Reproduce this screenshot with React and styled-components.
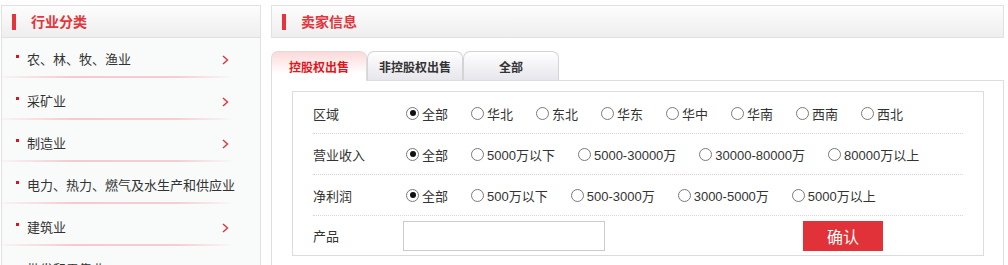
import React from "react";
import styled, { createGlobalStyle } from "styled-components";

const Global = createGlobalStyle`
  html, body { margin: 0; padding: 0; background: #fff; }
  body { font-family: "Liberation Sans", "Noto Sans CJK SC", sans-serif; font-size: 13px; color: #333; }
  * { box-sizing: border-box; }
`;

const RED = "#e3353b";

const Page = styled.div`
  display: flex;
  align-items: flex-start;
  gap: 10px;
  padding: 5px 0 0 1px;
  width: 1008px;
  height: 265px;
  overflow: hidden;
`;

const LeftPanel = styled.div`
  width: 260px;
  height: 320px;
  flex-shrink: 0;
  border: 1px solid #e1e1e1;
  background: #f9fafa;
`;

const PanelHeader = styled.div`
  display: flex;
  align-items: center;
  height: ${(p) => (p.$boxed ? "33px" : "32px")};
  border: ${(p) => (p.$boxed ? "1px solid #e1e1e1" : "none")};
  border-bottom: 1px solid #e1e1e1;
  background: linear-gradient(#fdfdfd, #eeeeee);
  padding-left: 10px;
`;

const Bar = styled.span`
  width: 4px;
  height: 16px;
  background: ${RED};
  margin-right: 15px;
`;

const HeaderTitle = styled.span`
  color: ${RED};
  font-weight: bold;
  font-size: 14px;
  line-height: 20px;
`;

const List = styled.ul`
  list-style: none;
  margin: 0;
  padding: 0;
`;

const Item = styled.li`
  padding-top: 12px;
  margin-bottom: 2px;
`;

const ItemRow = styled.div`
  display: flex;
  align-items: center;
  height: 20px;
  padding: 0 0 0 14px;
`;

const Dot = styled.span`
  flex-shrink: 0;
  width: 3px;
  height: 3px;
  background: #d4161c;
  align-self: flex-start;
  margin-top: 5px;
  margin-right: 8px;
`;

const ItemText = styled.span`
  font-size: 13px;
  line-height: 20px;
  color: #333;
  white-space: nowrap;
`;

const Chevron = styled.svg`
  margin-left: auto;
  margin-right: 31px;
  display: block;
  flex-shrink: 0;
`;

const Underline = styled.div`
  margin-top: 6px;
  width: 233px;
  height: 2px;
  background: linear-gradient(to right, rgba(245, 190, 198, 0.1), #f6c9cf 30%, #f6cdd3 75%, rgba(246, 205, 211, 0));
`;

const RightCol = styled.div`
  width: 733px;
  flex-shrink: 0;
  display: flex;
  flex-direction: column;
`;

const TabBar = styled.div`
  display: flex;
  align-items: flex-end;
  height: 29px;
  margin-top: 13px;
`;

const Tab = styled.div`
  position: relative;
  width: 96px;
  height: ${(p) => (p.$active ? "30px" : "29px")};
  margin-bottom: ${(p) => (p.$active ? "-1px" : "0")};
  z-index: ${(p) => (p.$active ? 1 : 0)};
  border: 1px solid ${(p) => (p.$active ? "#dcdcdc" : "#d4d4d4")};
  border-bottom: none;
  border-radius: 7px 7px 0 0;
  background: ${(p) =>
    p.$active
      ? "linear-gradient(#fcd9d9, #ffffff 75%)"
      : "linear-gradient(#ffffff, #e6e6ec)"};
  color: ${(p) => (p.$active ? "#e0161c" : "#333")};
  font-weight: bold;
  font-size: 12px;
  display: flex;
  align-items: center;
  justify-content: center;
  padding-bottom: ${(p) => (p.$active ? "1px" : "0")};
`;

const ContentBox = styled.div`
  border: 1px solid #dedede;
  border-bottom: none;
  padding: 10px 19px 0 20px;
  height: 200px;
`;

const InnerBox = styled.div`
  border: 1px solid #dcdcdc;
  padding: 1px 20px 0 20px;
  background: #fff;
`;

const Row = styled.div`
  display: flex;
  align-items: center;
  height: ${(p) => (p.$last ? "39px" : "41px")};
  border-bottom: ${(p) => (p.$last ? "none" : "1px dotted #d6d6d6")};
`;

const Label = styled.span`
  width: 90px;
  flex-shrink: 0;
  font-size: 13px;
  color: #333;
`;

const Option = styled.label`
  display: flex;
  align-items: center;
  margin-right: 20px;
  font-size: 13px;
  color: #333;
  white-space: nowrap;
`;

const Radio = styled.span`
  width: 13px;
  height: 13px;
  border-radius: 50%;
  border: 1px solid #7a7a7a;
  background: #fff;
  margin: 0 3px;
  display: flex;
  align-items: center;
  justify-content: center;
  &::after {
    content: "";
    width: 6px;
    height: 6px;
    border-radius: 50%;
    background: ${(p) => (p.$checked ? "#111" : "transparent")};
  }
`;

const Input = styled.input`
  width: 202px;
  height: 30px;
  border: 1px solid #cccccc;
  outline: none;
  padding: 0 4px;
  font-size: 13px;
`;

const Button = styled.button`
  margin-left: 198px;
  width: 80px;
  height: 30px;
  border: none;
  background: #e03238;
  color: #fff;
  font-size: 16px;
  font-family: "Liberation Sans", "Noto Sans CJK SC", sans-serif;
  cursor: pointer;
`;

const industries = [
  { name: "农、林、牧、渔业", arrow: true },
  { name: "采矿业", arrow: true },
  { name: "制造业", arrow: true },
  { name: "电力、热力、燃气及水生产和供应业", arrow: false },
  { name: "建筑业", arrow: true },
  { name: "批发和零售业", arrow: true },
];

const filters = [
  { label: "区域", options: ["全部", "华北", "东北", "华东", "华中", "华南", "西南", "西北"] },
  { label: "营业收入", options: ["全部", "5000万以下", "5000-30000万", "30000-80000万", "80000万以上"] },
  { label: "净利润", options: ["全部", "500万以下", "500-3000万", "3000-5000万", "5000万以上"] },
];

const tabs = ["控股权出售", "非控股权出售", "全部"];

export default function App() {
  return (
    <>
      <Global />
      <Page>
        <LeftPanel>
          <PanelHeader>
            <Bar />
            <HeaderTitle>行业分类</HeaderTitle>
          </PanelHeader>
          <List>
            {industries.map((it) => (
              <Item key={it.name}>
                <ItemRow>
                  <Dot />
                  <ItemText>{it.name}</ItemText>
                  {it.arrow && (
                    <Chevron width="7" height="10" viewBox="0 0 7 10">
                      <polyline points="1,1 5.5,5 1,9" fill="none" stroke="#e0343a" strokeWidth="1.4" />
                    </Chevron>
                  )}
                </ItemRow>
                <Underline />
              </Item>
            ))}
          </List>
        </LeftPanel>
        <RightCol>
          <PanelHeader $boxed>
            <Bar />
            <HeaderTitle>卖家信息</HeaderTitle>
          </PanelHeader>
          <TabBar>
            {tabs.map((t, i) => (
              <Tab key={t} $active={i === 0}>{t}</Tab>
            ))}
          </TabBar>
          <ContentBox>
            <InnerBox>
              {filters.map((f) => (
                <Row key={f.label}>
                  <Label>{f.label}</Label>
                  {f.options.map((o, i) => (
                    <Option key={o}>
                      <Radio $checked={i === 0} />
                      {o}
                    </Option>
                  ))}
                </Row>
              ))}
              <Row $last>
                <Label>产品</Label>
                <Input type="text" />
                <Button>确认</Button>
              </Row>
            </InnerBox>
          </ContentBox>
        </RightCol>
      </Page>
    </>
  );
}
